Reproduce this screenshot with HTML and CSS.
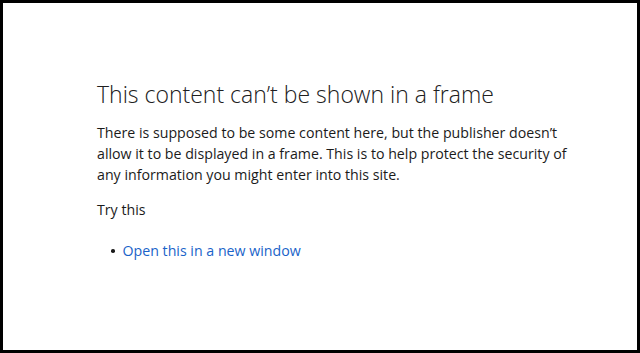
FILE: index.html
```html
<!DOCTYPE html>
<html lang="en">
<head>
<meta charset="utf-8">
<title>This content can’t be shown in a frame</title>
<link rel="stylesheet" href="styles.css">
</head>
<body>
<div class="frame">
  <main class="content">
    <h1 class="title">This content can’t be shown in a frame</h1>
    <p class="desc">There is supposed to be some content here, but the publisher doesn’t allow it to be displayed in a frame. This is to help protect the security of any information you might enter into this site.</p>
    <p class="try">Try this</p>
    <ul class="suggestions">
      <li class="item"><a class="link" href="#">Open this in a new window</a></li>
    </ul>
  </main>
</div>
</body>
</html>
```

FILE: styles.css
```css
html, body {
  margin: 0;
  padding: 0;
  height: 100%;
  background: #fff;
}
.frame {
  box-sizing: border-box;
  height: 100%;
  border: 3px solid #000;
  font-family: "Open Sans", "Noto Sans", sans-serif;
  color: #1b1b1b;
}
.content {
  padding: 76px 0 0 94px;
  max-width: 470px;
}
.title {
  margin: 0;
  font-size: 23px;
  font-weight: 350;
  line-height: 30px;
  color: #202020;
}
.desc {
  margin: 13px 0 0;
  font-size: 14.2px;
  line-height: 21px;
}
.try {
  margin: 14px 0 0;
  font-size: 14.2px;
  line-height: 21px;
}
.suggestions {
  margin: 20px 0 0;
  padding-left: 14px;
  list-style: none;
  font-size: 14.2px;
  line-height: 21px;
}
.item {
  display: flex;
  align-items: center;
  gap: 8px;
}
.item::before {
  content: "";
  width: 3.5px;
  height: 3.5px;
  border-radius: 50%;
  background: #1b1b1b;
  margin-top: 1px;
}
.link {
  color: #1a63c9;
  text-decoration: none;
}
```
